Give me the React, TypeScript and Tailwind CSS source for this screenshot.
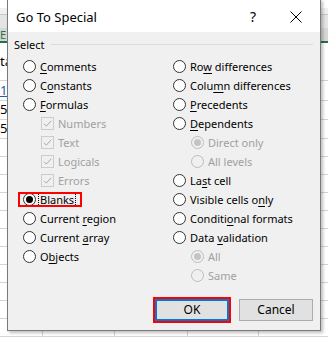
import React from "react";

const titleFont = { fontFamily: '"Noto Sans", "Segoe UI", Arial, sans-serif' };
const bodyFont = { fontFamily: '"Noto Sans", "Segoe UI", Arial, sans-serif' };

// access key underline helper
function Label({ text, k, disabled }: { text: string; k?: number; disabled?: boolean }) {
    const color = disabled ? "text-[#a0a0a0]" : "text-black";
    if (k === undefined) return <span className={color}>{text}</span>;
    return (
        <span className={color}>
            {text.slice(0, k)}
            <span className="underline underline-offset-[2px]">{text[k]}</span>
            {text.slice(k + 1)}
        </span>
    );
}

function Radio({ checked, disabled }: { checked?: boolean; disabled?: boolean }) {
    const stroke = disabled ? "#bcbcbc" : "#333333";
    const fill = disabled ? "#f0f0f0" : "#ffffff";
    const dot = disabled ? "#c4c4c4" : "#000000";
    return (
        <svg width="13" height="13" viewBox="0 0 13 13" className="shrink-0">
            <circle cx="6.5" cy="6.5" r="6" fill={fill} stroke={stroke} strokeWidth="1" />
            {checked && <circle cx="6.5" cy="6.5" r="3.5" fill={dot} />}
        </svg>
    );
}

function Check() {
    return (
        <svg width="13" height="13" viewBox="0 0 13 13" className="shrink-0">
            <rect x="0.5" y="0.5" width="12" height="12" fill="#f0f0f0" stroke="#cccccc" />
            <path d="M3 6.8 L5.3 9.1 L10.2 3.8" fill="none" stroke="#a8a8a8" strokeWidth="1" />
        </svg>
    );
}

function RadioRow({ text, k, checked, disabled, indent }: { text: string; k?: number; checked?: boolean; disabled?: boolean; indent?: boolean }) {
    return (
        <div className={`flex items-center gap-[4px] h-[19px] ${indent ? "pl-[18px]" : ""}`}>
            <Radio checked={checked} disabled={disabled} />
            <Label text={text} k={k} disabled={disabled} />
        </div>
    );
}

function CheckRow({ text }: { text: string }) {
    return (
        <div className="flex items-center gap-[4px] h-[19px] pl-[18px]">
            <Check />
            <Label text={text} disabled />
        </div>
    );
}

function SheetRow({ h, children }: { h: string; children?: React.ReactNode }) {
    return (
        <div className={`flex ${h} border-b border-[#d4d4d4] text-[13px] text-black items-center`}>
            <div className="w-[43px] h-full border-r border-[#d4d4d4] flex items-center">{children}</div>
            <div className="w-[72px] h-full border-r border-[#d4d4d4]" />
            <div className="w-[73px] h-full border-r border-[#d4d4d4]" />
            <div className="w-[71px] h-full border-r border-[#d4d4d4]" />
            <div className="flex-1" />
        </div>
    );
}

function SheetBackground() {
    const rest = Array.from({ length: 11 });
    return (
        <div className="flex flex-col w-[328px] h-[337px] bg-white" style={titleFont}>
            <div className="h-[8px] bg-white" />
            <div className="h-[7px] bg-[#f0f0f0]" />
            <div className="h-[15px] bg-[#e4e4e4] border-t border-[#c8c8c8]" />
            <div className="h-[13px] bg-[#d6d6d6] text-[#217346] text-[11px] leading-[13px]">E</div>
            <div className="h-[2px] bg-[#217346]" />
            <SheetRow h="h-[40px]">ta</SheetRow>
            <SheetRow h="h-[20px]">
                <span className="text-[#1f5fa8] underline">1</span>
            </SheetRow>
            <SheetRow h="h-[19px]">5</SheetRow>
            <SheetRow h="h-[19px]">5</SheetRow>
            {rest.map((_, i) => (
                <SheetRow key={i} h="h-[19px]" />
            ))}
        </div>
    );
}

export default function App() {
    return (
        <div className="relative w-[328px] h-[337px] overflow-hidden">
            <SheetBackground />

            {/* dialog lies over the sheet */}
            <div
                className="absolute left-[7px] top-[-1px] w-[314px] h-[332px] border border-[#7a7a7a] bg-[#f0f0f0] shadow-[2px_2px_3px_rgba(0,0,0,0.25)] flex flex-col text-[11px] leading-[19px]"
                style={bodyFont}
            >
                <div className="h-[32px] bg-white flex items-center pl-[8px] pr-[18px] shrink-0" style={titleFont}>
                    <span className="text-[13px] text-black mt-[2px]">Go To Special</span>
                    <span className="ml-auto text-[14px] text-black mt-[1px]">?</span>
                    <svg width="12" height="12" viewBox="0 0 12 12" className="ml-[34px] mt-[2px]">
                        <path d="M0.5 0.5 L11.5 11.5 M11.5 0.5 L0.5 11.5" stroke="#000" strokeWidth="1" />
                    </svg>
                </div>

                <div className="flex flex-col pt-[3px] pl-[15px] pr-[7px] flex-1">
                    <div className="flex items-center h-[19px] -ml-[9px]">
                        <span>Select</span>
                        <div className="flex-1 h-px bg-[#dcdcdc] ml-[6px]" />
                    </div>

                    <div className="flex mt-[3px]">
                        <div className="w-[150px] flex flex-col">
                            <RadioRow text="Comments" k={0} />
                            <RadioRow text="Constants" k={1} />
                            <RadioRow text="Formulas" k={0} />
                            <CheckRow text="Numbers" />
                            <CheckRow text="Text" />
                            <CheckRow text="Logicals" />
                            <CheckRow text="Errors" />
                            <div className="relative flex items-center gap-[4px] h-[19px]">
                                <Radio checked />
                                <span className="border border-dotted border-black px-[1px] leading-[13px] -ml-[2px]">
                                    <Label text="Blanks" k={4} />
                                </span>
                                <span className="absolute left-[-5px] top-[2px] w-[64px] h-[15px] border-2 border-[#ff0000]" />
                            </div>
                            <RadioRow text="Current region" k={8} />
                            <RadioRow text="Current array" k={8} />
                            <RadioRow text="Objects" k={1} />
                        </div>
                        <div className="flex flex-col">
                            <RadioRow text="Row differences" k={2} />
                            <RadioRow text="Column differences" k={4} />
                            <RadioRow text="Precedents" k={0} />
                            <RadioRow text="Dependents" k={0} />
                            <RadioRow text="Direct only" checked disabled indent />
                            <RadioRow text="All levels" disabled indent />
                            <RadioRow text="Last cell" k={2} />
                            <RadioRow text="Visible cells only" k={15} />
                            <RadioRow text="Conditional formats" k={7} />
                            <RadioRow text="Data validation" k={5} />
                            <RadioRow text="All" checked disabled indent />
                            <RadioRow text="Same" disabled indent />
                        </div>
                    </div>

                    <div className="flex items-center justify-end gap-[8px] mt-[12px] text-[12px]">
                        <button className="w-[78px] h-[26px] border-2 border-[#ff0000] bg-[#e1e1e1] flex">
                            <span className="flex-1 border-2 border-[#0078d7] flex items-center justify-center text-black leading-none">OK</span>
                        </button>
                        <button className="w-[74px] h-[22px] border border-[#adadad] bg-[#e1e1e1] flex items-center justify-center text-black leading-none">
                            Cancel
                        </button>
                    </div>
                </div>
            </div>
        </div>
    );
}
